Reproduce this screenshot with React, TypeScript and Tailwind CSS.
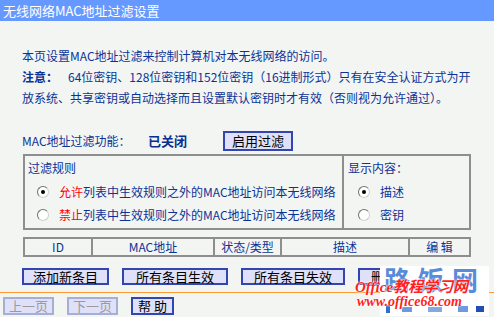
import React from 'react';

const font = { fontFamily: '"Noto Sans CJK SC", "Noto Sans", sans-serif' };

function Radio({ checked }: { checked?: boolean }) {
  return (
    <span className="relative inline-flex items-center justify-center w-[12px] h-[12px] rounded-full bg-white border border-[#6f6f6f] border-r-[#d0d0d0] border-b-[#d0d0d0]">
      {checked && <span className="w-[4px] h-[4px] rounded-full bg-black" />}
    </span>
  );
}

function Btn({ children, w, disabled }: { children: React.ReactNode; w: string; disabled?: boolean }) {
  return (
    <div
      className={`${w} flex items-center justify-center bg-[#dfe1fb] border-2 text-[13px] ${
        disabled ? 'border-[#a7aed6] text-[#9a9a9a]' : 'border-[#3346b0] text-black'
      }`}
    >
      {children}
    </div>
  );
}

export default function App() {
  return (
    <div className="relative w-[494px] h-[317px] overflow-hidden bg-[#f3f5f3] text-[12px] text-[#0b3396]" style={font}>
      <div className="h-[21px] bg-[#6699ff] text-white text-[13px] leading-[21px] pl-[3px]">无线网络MAC地址过滤设置</div>

      <div className="pl-[22px] mt-[24px] leading-[21px]">
        <div>本页设置MAC地址过滤来控制计算机对本无线网络的访问。</div>
        <div>
          <span className="font-bold mr-[10px]">注意：</span>64位密钥、128位密钥和152位密钥（16进制形式）只有在安全认证方式为开
        </div>
        <div>放系统、共享密钥或自动选择而且设置默认密钥时才有效（否则视为允许通过）。</div>
      </div>

      <div className="flex items-center h-[20px] mt-[23px] pl-[22px]">
        <span className="w-[126px]">MAC地址过滤功能：</span>
        <span className="w-[75px] font-bold text-[13px] text-[#0a2f8f]">已关闭</span>
        <Btn w="w-[70px] h-[20px]">启用过滤</Btn>
      </div>

      <div className="ml-[23px] mt-[3px] w-[448px] h-[76px] border-2 border-[#8e8e8e] flex">
        <div className="w-[319px] border-r-2 border-[#8e8e8e] pl-[3px] pt-[2px]">
          <div className="h-[20px] leading-[20px]">过滤规则</div>
          <div className="flex items-center h-[23px] mt-[2px] pl-[9px] gap-[10px]">
            <Radio checked />
            <span>
              <span className="text-[#ff0000]">允许</span>列表中生效规则之外的MAC地址访问本无线网络
            </span>
          </div>
          <div className="flex items-center h-[23px] pl-[9px] gap-[10px]">
            <Radio />
            <span>
              <span className="text-[#ff0000]">禁止</span>列表中生效规则之外的MAC地址访问本无线网络
            </span>
          </div>
        </div>
        <div className="flex-1 pl-[4px] pt-[2px]">
          <div className="h-[20px] leading-[20px]">显示内容：</div>
          <div className="flex items-center h-[23px] mt-[2px] pl-[10px] gap-[10px]">
            <Radio checked />
            <span>描述</span>
          </div>
          <div className="flex items-center h-[23px] pl-[10px] gap-[10px]">
            <Radio />
            <span>密钥</span>
          </div>
        </div>
      </div>

      <div className="ml-[23px] mt-[7px] w-[448px] h-[20px] border-2 border-[#8e8e8e] flex text-center leading-[16px]">
        <div className="w-[68px] border-r-2 border-[#8e8e8e]">ID</div>
        <div className="w-[122px] border-r-2 border-[#8e8e8e]">MAC地址</div>
        <div className="w-[67px] border-r-2 border-[#8e8e8e]">状态/类型</div>
        <div className="w-[128px] border-r-2 border-[#8e8e8e]">描述</div>
        <div className="flex-1">编 辑</div>
      </div>

      <div className="flex items-center h-[17px] mt-[11px] pl-[22px]">
        <Btn w="w-[87px] h-[17px]">添加新条目</Btn>
        <div className="w-[13px]" />
        <Btn w="w-[106px] h-[17px]">所有条目生效</Btn>
        <div className="w-[13px]" />
        <Btn w="w-[104px] h-[17px]">所有条目失效</Btn>
        <div className="w-[13px]" />
        <Btn w="w-[104px] h-[17px]">删除所有条目</Btn>
      </div>

      <div className="mt-[7px] h-px bg-[#ff9933]" />

      <div className="flex items-center h-[18px] mt-[4px] pl-[3px] gap-[13px]">
        <Btn w="w-[51px] h-[18px]" disabled>上一页</Btn>
        <Btn w="w-[51px] h-[18px]" disabled>下一页</Btn>
        <Btn w="w-[43px] h-[18px]">帮 助</Btn>
      </div>

      <div className="absolute left-[380px] top-[266px] w-[109px] h-[50px] bg-white">
        <div className="absolute left-[4px] top-[0px] text-[26px] leading-[26px] font-bold text-[#2f6fd0] tracking-[8px] opacity-80">
          路饭网
        </div>
        <svg className="absolute left-0 top-[38px]" width="109" height="10" viewBox="0 0 109 10">
          <rect x="6" y="1" width="4" height="8" fill="#2f6fd0" />
          <rect x="22" y="3" width="10" height="5" fill="#2f6fd0" opacity="0.7" />
          <rect x="48" y="3" width="14" height="5" fill="#2f6fd0" opacity="0.6" />
          <rect x="78" y="2" width="10" height="6" fill="#2f6fd0" opacity="0.7" />
          <rect x="96" y="2" width="8" height="6" fill="#1f4fb0" />
        </svg>
      </div>
      <div
        className="absolute left-[355px] top-[279px] text-[15px] leading-[16px] font-bold italic text-[#ff1f1f] whitespace-nowrap"
        style={{ fontFamily: '"Liberation Serif", "Noto Sans CJK SC", serif', textShadow: '0 0 2px #fff, 0 0 2px #fff' }}
      >
        Office教程学习网
      </div>
      <div
        className="absolute left-[357px] top-[295px] text-[14px] leading-[14px] font-bold italic text-[#ff1f1f] whitespace-nowrap"
        style={{ fontFamily: '"Liberation Serif", serif', textShadow: '0 0 2px #fff, 0 0 2px #fff' }}
      >
        www.office68.com
      </div>
    </div>
  );
}
